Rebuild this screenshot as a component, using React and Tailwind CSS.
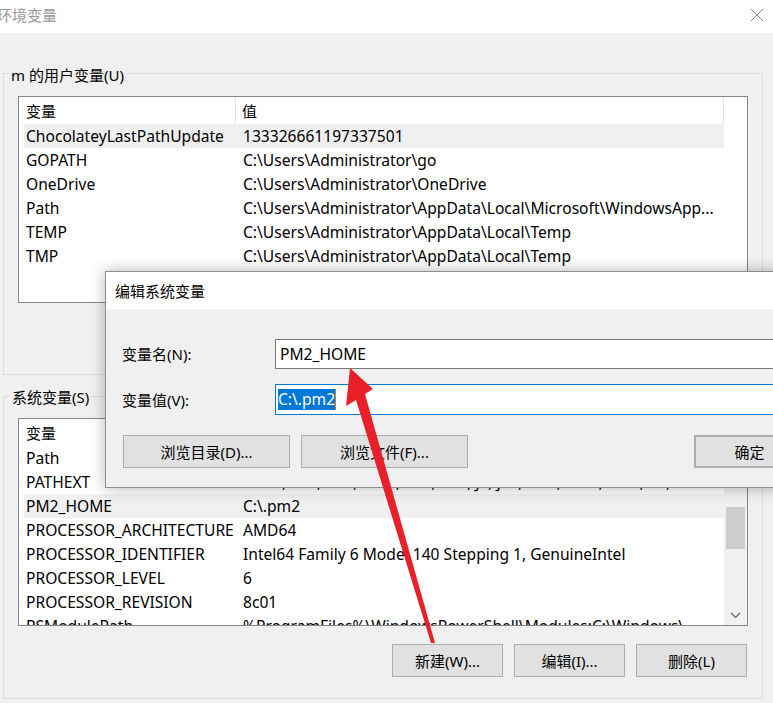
import React from 'react';

const userVars = [
    ['ChocolateyLastPathUpdate', '133326661197337501', true],
    ['GOPATH', 'C:\\Users\\Administrator\\go'],
    ['OneDrive', 'C:\\Users\\Administrator\\OneDrive'],
    ['Path', 'C:\\Users\\Administrator\\AppData\\Local\\Microsoft\\WindowsApp...'],
    ['TEMP', 'C:\\Users\\Administrator\\AppData\\Local\\Temp'],
    ['TMP', 'C:\\Users\\Administrator\\AppData\\Local\\Temp'],
];

const sysVars = [
    ['Path', 'C:\\Program Files\\Common Files\\Oracle\\Java\\javapath;C:\\Windo...'],
    ['PATHEXT', '.COM;.EXE;.BAT;.CMD;.VBS;.VBE;.JS;.JSE;.WSF;.WSH;.MSC;.PY;.PYW'],
    ['PM2_HOME', 'C:\\.pm2', true],
    ['PROCESSOR_ARCHITECTURE', 'AMD64'],
    ['PROCESSOR_IDENTIFIER', 'Intel64 Family 6 Model 140 Stepping 1, GenuineIntel'],
    ['PROCESSOR_LEVEL', '6'],
    ['PROCESSOR_REVISION', '8c01'],
    ['PSModulePath', '%ProgramFiles%\\WindowsPowerShell\\Modules;C:\\Windows\\...'],
];

function WinButton({ children, className = '' }) {
    return (
        <div className={`h-[33px] bg-[#e1e1e1] border border-[#adadad] flex items-center justify-center ${className}`}>
            {children}
        </div>
    );
}

function VarList({ rows, scrollbar }) {
    return (
        <div className="w-[730px] h-full border border-[#828790] bg-white flex overflow-hidden">
            <div className="w-[705px] pl-[5px] shrink-0">
                <div className="h-[27px] flex items-center">
                    <div className="w-[212px] h-full pl-[2px] flex items-center border-r border-[#e5e5e5]">变量</div>
                    <div className="flex-1 h-full pl-[6px] flex items-center border-r border-[#e5e5e5]">值</div>
                </div>
                {rows.map(([name, value, sel], i) => (
                    <div key={i} className={`h-[24px] flex items-center whitespace-nowrap text-[15.6px] ${sel ? 'bg-[#f0f0f0]' : ''}`}>
                        <div className="w-[212px] pl-[2px] shrink-0">{name}</div>
                        <div className="pl-[7px] overflow-hidden">{value}</div>
                    </div>
                ))}
            </div>
            {scrollbar ? (
                <div className="flex-1 bg-[#f0f0f0] flex flex-col items-center">
                    <div className="h-[88px]" />
                    <div className="w-[19px] h-[42px] bg-[#cdcdcd]" />
                    <div className="flex-1" />
                    <svg width="11" height="7" viewBox="0 0 11 7" className="mb-[6px]">
                        <path d="M1 1 L5.5 5.5 L10 1" fill="none" stroke="#606060" strokeWidth="1.2" />
                    </svg>
                </div>
            ) : (
                <div className="flex-1 bg-white" />
            )}
        </div>
    );
}

export default function App() {
    return (
        <div className="relative w-[773px] h-[703px] overflow-hidden bg-[#f0f0f0] text-[15px] leading-[24px] text-black font-['Noto_Sans','Noto_Sans_CJK_SC',sans-serif]">
            {/* window title */}
            <div className="h-[33px] bg-white flex items-center justify-between pb-[3px]">
                <span className="-ml-[3px] text-[#9a9a9a]">环境变量</span>
                <svg width="14" height="14" viewBox="0 0 14 14" className="mr-[9px]">
                    <path d="M1 1 L13 13 M13 1 L1 13" stroke="#8a8a8a" strokeWidth="1" />
                </svg>
            </div>

            <div className="pt-[40px] pl-[3px] w-[763px]">
                {/* user variables */}
                <div className="relative h-[302px] border border-[#dcdcdc] pl-[14px] pt-[22px]">
                    <span className="absolute left-[5px] -top-[9px] px-[2px] bg-[#f0f0f0] leading-[20px]">m 的用户变量(U)</span>
                    <div className="h-[207px]">
                        <VarList rows={userVars} />
                    </div>
                </div>

                {/* system variables */}
                <div className="relative mt-[21px] h-[303px] border border-[#dcdcdc] pl-[14px] pt-[21px]">
                    <span className="absolute left-[6px] -top-[10px] px-[2px] bg-[#f0f0f0] leading-[20px]">系统变量(S)</span>
                    <div className="h-[208px]">
                        <VarList rows={sysVars} scrollbar />
                    </div>
                    <div className="mt-[18px] pr-[15px] flex justify-end gap-[11px]">
                        <WinButton className="w-[111px]">新建(W)...</WinButton>
                        <WinButton className="w-[111px]">编辑(I)...</WinButton>
                        <WinButton className="w-[111px]">删除(L)</WinButton>
                    </div>
                </div>
            </div>

            {/* edit dialog on top */}
            <div className="absolute left-[105px] top-[271px] w-[720px] h-[217px] border border-[#8e8e8e] bg-[#f0f0f0] shadow-[0_0_14px_rgba(0,0,0,0.3)]">
                <div className="h-[37px] bg-white flex items-center pl-[9px]">编辑系统变量</div>
                <div className="pt-[30px]">
                    <div className="flex items-center">
                        <div className="w-[169px] pl-[16px] shrink-0">变量名(N):</div>
                        <div className="flex-1 h-[30px] border border-[#7a7a7a] bg-white pl-[4px] flex items-center text-[15.6px]">PM2_HOME</div>
                    </div>
                    <div className="flex items-center mt-[15px]">
                        <div className="w-[169px] pl-[16px] shrink-0">变量值(V):</div>
                        <div className="flex-1 h-[31px] border border-[#0078d7] bg-white pl-[2px] flex items-center text-[15.6px]">
                            <span className="bg-[#0078d7] text-white leading-[21px]">C:\.pm2</span>
                            <span className="w-[1px] h-[21px] bg-[#e07a1f]" />
                        </div>
                    </div>
                    <div className="flex mt-[20px] pl-[17px]">
                        <WinButton className="w-[167px]">浏览目录(D)...</WinButton>
                        <WinButton className="w-[167px] ml-[11px]">浏览文件(F)...</WinButton>
                        <WinButton className="w-[111px] ml-[226px] border-2 border-[#0078d7]">确定</WinButton>
                    </div>
                </div>
            </div>

            {/* red annotation arrow */}
            <svg className="absolute inset-0 pointer-events-none" width="773" height="703" viewBox="0 0 773 703">
                <polygon
                    points="350,368 373,389 365,394 435,643 431,643 356,400 346,406"
                    fill="#e8202a"
                />
            </svg>
        </div>
    );
}
